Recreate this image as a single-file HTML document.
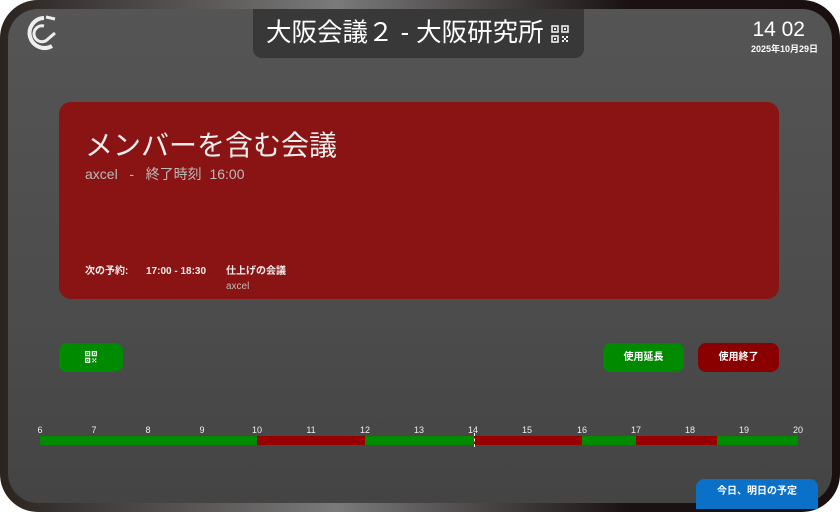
<!DOCTYPE html>
<html><head><meta charset="utf-8"><style>
*{margin:0;padding:0;box-sizing:border-box}
body{width:840px;height:512px;background:#fff;overflow:hidden;font-family:"Liberation Sans","Noto Sans CJK JP",sans-serif;color:#fff;position:relative}
.frame{position:absolute;left:0;top:0;width:840px;height:512px;border-radius:38px;background:linear-gradient(90deg,#2a2420,#7a7a7a 40%,#1a1212 75%,#1a1010)}
.screen{position:absolute;left:8px;top:9px;width:824px;height:494px;border-radius:30px;background:linear-gradient(180deg,#555 0%,#4c4c4c 60%,#444 100%);overflow:hidden}
.abs{position:absolute;line-height:1.2}
.title{left:253px;top:9px;width:331px;height:49px;background:#383838;border-radius:0 0 9px 9px;font-size:25.5px;line-height:49px;padding-left:13px;white-space:nowrap}
.card{left:59px;top:102px;width:720px;height:197px;background:#8a1414;border-radius:12px}
.btn{border-radius:8px;font-size:10px;font-weight:bold;text-align:center;line-height:29px}
.lbl{font-size:9px;top:425px;width:20px;margin-left:-10px;text-align:center;color:#eee}
.seg{top:436px;height:9px}
</style></head><body>
<div class="frame"></div>
<div class="screen"></div>
<svg class="abs" style="left:22px;top:13px" width="40" height="40" viewBox="0 0 40 40"><path d="M22 5 A15 15 0 1 0 30 33" fill="none" stroke="#eee" stroke-width="4"/><path d="M22 13 A8 8 0 1 0 26 26 L33 20" fill="none" stroke="#eee" stroke-width="3"/><path d="M24 4 L33 6" stroke="#eee" stroke-width="3"/></svg>
<div class="abs title">大阪会議２ - 大阪研究所 <svg width="18" height="18" viewBox="0 0 18 18" style="vertical-align:-2px"><g fill="none" stroke="#eee" stroke-width="1.6"><rect x="1" y="1" width="6" height="6"/><rect x="11" y="1" width="6" height="6"/><rect x="1" y="11" width="6" height="6"/></g><g fill="#eee"><rect x="3" y="3" width="2" height="2"/><rect x="13" y="3" width="2" height="2"/><rect x="3" y="13" width="2" height="2"/><rect x="11" y="11" width="2" height="2"/><rect x="15" y="11" width="2" height="2"/><rect x="13" y="13" width="2" height="2"/><rect x="11" y="15" width="2" height="2"/><rect x="15" y="15" width="2" height="2"/></g></svg></div>
<div class="abs" style="right:35px;top:17px;font-size:21px">14 02</div>
<div class="abs" style="right:22px;top:44px;font-size:9px;font-weight:bold">2025年10月29日</div>
<div class="abs card"></div>
<div class="abs" style="left:85px;top:129px;font-size:28px;color:#eee">メンバーを含む会議</div>
<div class="abs" style="left:85px;top:166px;font-size:14px;color:#bbb;white-space:pre">axcel   -   終了時刻  16:00</div>
<div class="abs" style="left:85px;top:266px;font-size:10px;font-weight:bold;color:#eee">次の予約:</div>
<div class="abs" style="left:146px;top:266px;font-size:10px;font-weight:bold;color:#eee">17:00 - 18:30</div>
<div class="abs" style="left:226px;top:266px;font-size:10px;font-weight:bold;color:#eee">仕上げの会議</div>
<div class="abs" style="left:226px;top:281px;font-size:10px;color:#bbb">axcel</div>
<div class="abs btn" style="left:59px;top:343px;width:64px;height:29px;background:#008a00"><svg width="12" height="12" viewBox="0 0 18 18" style="margin-top:8px"><g fill="none" stroke="#fff" stroke-width="1.8"><rect x="1" y="1" width="6" height="6"/><rect x="11" y="1" width="6" height="6"/><rect x="1" y="11" width="6" height="6"/></g><g fill="#fff"><rect x="3" y="3" width="2" height="2"/><rect x="13" y="3" width="2" height="2"/><rect x="3" y="13" width="2" height="2"/><rect x="11" y="11" width="2" height="2"/><rect x="15" y="11" width="2" height="2"/><rect x="13" y="13" width="2" height="2"/><rect x="11" y="15" width="2" height="2"/><rect x="15" y="15" width="2" height="2"/></g></svg></div>
<div class="abs btn" style="left:603px;top:343px;width:81px;height:29px;background:#008a00">使用延長</div>
<div class="abs btn" style="left:698px;top:343px;width:81px;height:29px;background:#8a0000">使用終了</div>
<div class="abs lbl" style="left:40px">6</div><div class="abs lbl" style="left:94px">7</div><div class="abs lbl" style="left:148px">8</div><div class="abs lbl" style="left:202px">9</div><div class="abs lbl" style="left:257px">10</div><div class="abs lbl" style="left:311px">11</div><div class="abs lbl" style="left:365px">12</div><div class="abs lbl" style="left:419px">13</div><div class="abs lbl" style="left:473px">14</div><div class="abs lbl" style="left:527px">15</div><div class="abs lbl" style="left:582px">16</div><div class="abs lbl" style="left:636px">17</div><div class="abs lbl" style="left:690px">18</div><div class="abs lbl" style="left:744px">19</div><div class="abs lbl" style="left:798px">20</div>
<div class="abs seg" style="left:40px;width:217px;background:#008a00"></div>
<div class="abs seg" style="left:257px;width:108px;background:#960000"></div>
<div class="abs seg" style="left:365px;width:109px;background:#008a00"></div>
<div class="abs seg" style="left:474px;width:108px;background:#960000"></div>
<div class="abs seg" style="left:582px;width:54px;background:#008a00"></div>
<div class="abs seg" style="left:636px;width:81px;background:#960000"></div>
<div class="abs seg" style="left:717px;width:81px;background:#008a00"></div>
<div class="abs" style="left:474px;top:433px;height:14px;border-left:1px dashed #fff"></div>
<div class="abs" style="left:696px;top:479px;width:122px;height:30px;background:#0a70c8;border-radius:8px 8px 0 0;font-size:10px;font-weight:bold;text-align:center;line-height:26px">今日、明日の予定</div>
</body></html>
